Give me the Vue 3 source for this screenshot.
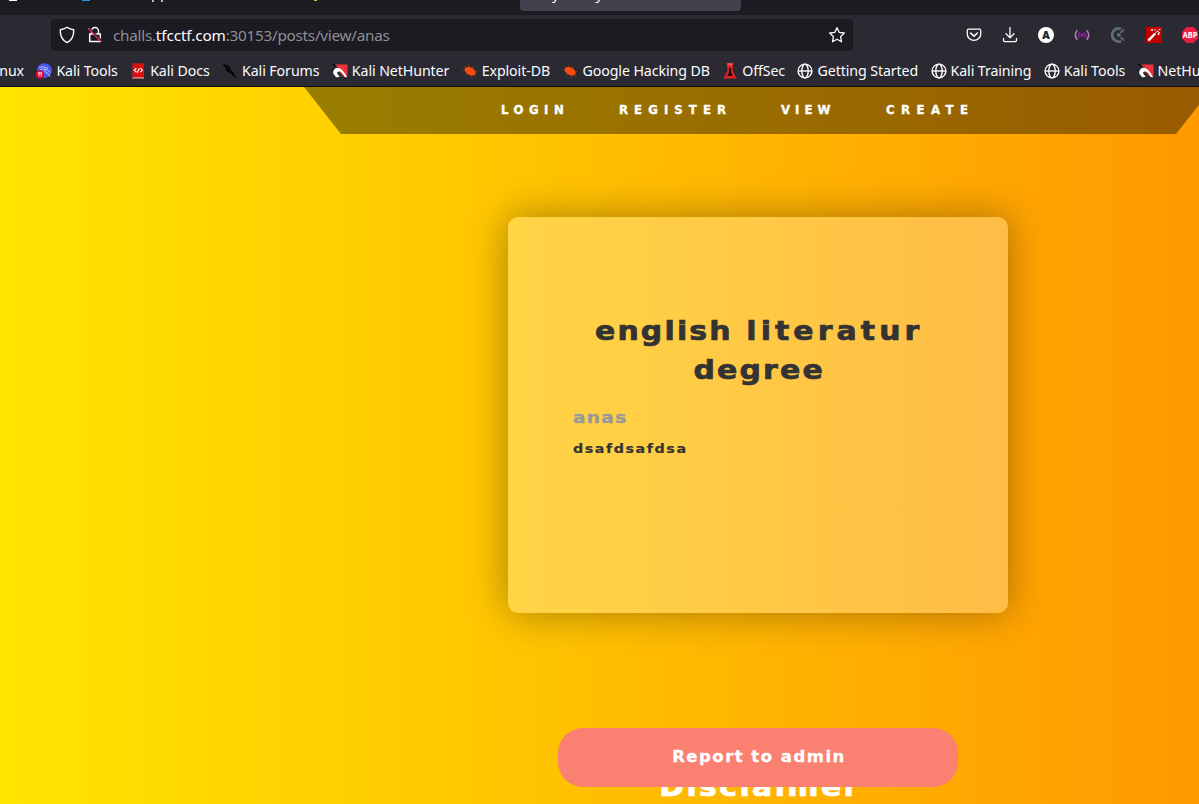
<script setup>
const bookmarks = [
  { icon: 'kali', label: 'Kali Tools' },
  { icon: 'book', label: 'Kali Docs' },
  { icon: 'forum', label: 'Kali Forums' },
  { icon: 'hunter', label: 'Kali NetHunter' },
  { icon: 'bug', label: 'Exploit-DB' },
  { icon: 'bug', label: 'Google Hacking DB' },
  { icon: 'offsec', label: 'OffSec' },
  { icon: 'globe', label: 'Getting Started' },
  { icon: 'globe', label: 'Kali Training' },
  { icon: 'globe', label: 'Kali Tools' },
  { icon: 'hunter', label: 'NetHunter' }
]
const links = ['login', 'register', 'view', 'create']
</script>

<template>
  <div class="window">
    <div class="tabs">
      <i class="fav-white"></i>
      <i class="fav-blue"></i>
      <span class="tab-text first">pp</span>
      <i class="fav-yellow"></i>
      <div class="tab-active"><span class="tab-text">y</span><span class="tab-text">y</span></div>
    </div>

    <div class="toolbar">
      <div class="urlbar">
        <svg class="shield" width="16" height="18" viewBox="0 0 16 18"><path d="M8 1.2C10 2.7 12.300 3.500 14.700 3.700C15 9.500 13.200 14 8 16.600C2.800 14 1 9.500 1.300 3.700C3.700 3.500 6 2.700 8 1.200Z" fill="none" stroke="#fbfbfe" stroke-width="1.400" stroke-linejoin="round" /></svg>
        <svg class="lock" width="16" height="18" viewBox="0 0 16 18"><path d="M4.500 8V5a3.500 3.500 0 0 1 7 0v3M2.700 8h10.600v7.500H2.700z" fill="none" stroke="#fbfbfe" stroke-width="1.500" stroke-linejoin="round" /><path d="M2.500 2.500L15 15" stroke="#1c1b22" stroke-width="1.500" /><path d="M1 2L14.500 16" stroke="#e22850" stroke-width="1.400" /></svg>
        <span class="url">challs.<b>tfcctf.com</b>:30153/posts/view/anas</span>
        <svg class="star" width="18" height="18" viewBox="0 0 18 18"><path d="M9 1.700L11.200 6.300L16.300 7L12.600 10.600L13.500 15.800L9 13.300L4.500 15.800L5.400 10.600L1.700 7L6.800 6.300Z" fill="none" stroke="#fbfbfe" stroke-width="1.300" stroke-linejoin="round" /></svg>
      </div>
      <div class="extensions">
        <svg viewBox="0 0 16 16"><path d="M2.600 2.200h10.800a1.300 1.300 0 0 1 1.300 1.300v3.700a6.700 6.200 0 0 1-13.400 0V3.500a1.300 1.300 0 0 1 1.300-1.300Z" fill="none" stroke="#fbfbfe" stroke-width="1.300" /><path d="M4.600 6L8 9.100L11.400 6" fill="none" stroke="#fbfbfe" stroke-width="1.600" stroke-linecap="round" stroke-linejoin="round" /></svg>
        <svg viewBox="0 0 16 16"><path d="M8 .5V10.500M4 6.700L8 10.700L12 6.700M1.500 11.500v1.700a1.500 1.500 0 0 0 1.500 1.500h10a1.500 1.500 0 0 0 1.500-1.500v-1.700" fill="none" stroke="#fbfbfe" stroke-width="1.300" stroke-linecap="round" stroke-linejoin="round" /></svg>
        <svg viewBox="0 0 16 16"><circle cx="8" cy="8" r="8" fill="#fff" /><text x="8" y="11.700" text-anchor="middle" class="letter-a">A</text></svg>
        <svg viewBox="0 0 16 16"><circle cx="8" cy="8" r="1.500" fill="#a51bb9" /><path d="M5.900 5.200Q3.700 8 5.900 10.800M10.100 5.200Q12.300 8 10.100 10.800" fill="none" stroke="#8b1b9c" stroke-width="1.400" /><path d="M3.300 3.200Q-.7 8 3.300 12.800M12.700 3.200Q16.700 8 12.700 12.800" fill="none" stroke="#b87bc4" stroke-width="1.500" /></svg>
        <svg viewBox="0 0 16 16"><path d="M11 1.800A6.600 6.600 0 1 0 11 14.200" fill="none" stroke="#5c6d77" stroke-width="2.700" /><circle cx="8.800" cy="8" r="1.900" fill="#5c6d77" /><path d="M10.500 5.900L14 2.400M10.500 10.100L14 13.600" stroke="#5c6d77" stroke-width="1.900" /></svg>
        <svg viewBox="0 0 16 16"><rect width="16" height="16" fill="#c00000" /><path d="M2.300 13.600L9.200 6.500" stroke="#fff" stroke-width="2.400" /><path d="M9.200 6.400L12 3.400M5 3h2M6 2v2M9 2.200v1.500M13 2.500h1.500M11.500 7h2M12.500 6v2M11 4l3 2" stroke="#fff" stroke-width="1" /></svg>
        <svg viewBox="0 0 16 16"><path d="M4.700 0h6.600L16 4.700v6.600L11.300 16H4.700L0 11.300V4.700Z" fill="#ed1e45" /><text x="8" y="11.100" text-anchor="middle" textLength="14.400" lengthAdjust="spacingAndGlyphs" class="abp">ABP</text></svg>
      </div>
    </div>

    <div class="bookmarks">
      <span class="cut"><span>Kali Linux</span></span>
      <span v-for="(b, n) in bookmarks" :key="n" class="bookmark">
        <svg viewBox="0 0 16 16">
          <template v-if="b.icon === 'kali'">
            <circle cx="8.500" cy="7.500" r="7.300" fill="#4d57ef" />
            <path d="M3 4.500Q8 2.500 12 5.500M4 7Q9 4 14.500 9.500M9 6Q7.500 9 11 10Q13.500 11 13.500 13.500" fill="none" stroke="#b9c4ff" stroke-width="1" />
            <circle cx="4" cy="11.500" r="4.100" fill="#e4002f" />
            <path d="M1.800 9.900h4.400M3 9.900V13.500M5.200 9.900V13.500" fill="none" stroke="#fff" stroke-width=".9" />
          </template>
          <template v-else-if="b.icon === 'book'">
            <path d="M1 .5h3V15.500H1z" fill="#2a3555" /><path d="M2.500 .3H14V14H2.500z" fill="#d91010" /><path d="M2.500 14H14v1.700H2.500z" fill="#d97a70" />
            <path d="M6.300 5.200L4.200 7.300L6.300 9.200M9.300 5.200L7.100 9.800M10.300 5.200L12.400 7.300L10.300 9.200" fill="none" stroke="#fff" stroke-width="1.100" />
          </template>
          <template v-else-if="b.icon === 'forum'">
            <path d="M0 1.500L3 0L4 2L6 1.500L8.500 4.500L10 8L12.500 9.500L12 11L15.500 14L15 15.700L10.500 13L8 10.500L5 9.500L2.500 5.500L3 4Z" fill="#08080a" stroke="#55545b" stroke-width=".3" />
          </template>
          <template v-else-if="b.icon === 'hunter'">
            <path d="M3 1.500H15.500V13.500L8 6Z" fill="#ef313a" />
            <path d="M.5 .8L3.500 3.500M.3 7L2 8" stroke="#08080a" stroke-width="1.500" />
            <path d="M3.700 13.800Q-1 9.500 2.700 6Q8 1.500 15.300 14.300L12.500 14Q8.500 7.500 5.500 9Q4 10.500 7.800 13.500Q5.500 15 3.700 13.800Z" fill="#fff" />
            <path d="M5.800 8.800Q9 7 12.800 14L9 12.500Q10 10 5.800 8.800" fill="#c32c38" />
          </template>
          <template v-else-if="b.icon === 'bug'">
            <path d="M2 3l3 3M.5 7l4 1M3.500 13l3-3M6 1.500l1.500 4M11 3l-.7 3.500M15.500 8.500h-3M9 15l.5-4M14 13.500l-2.500-2" stroke="#8e3a20" stroke-width=".8" />
            <ellipse cx="8.200" cy="8.300" rx="6" ry="3.700" transform="rotate(28 8.200 8.300)" fill="#ff4b0b" />
          </template>
          <template v-else-if="b.icon === 'offsec'">
            <path d="M5.200 .2h5.600v8l4 7.300H1.300l4-7.300z" fill="#df2025" /><path d="M7.100 5h1.900v4l1.800 4H5.300l1.800-4z" fill="#210a0d" /><path d="M5.300 .2h5.500v2.200H5.300z" fill="#ff514f" />
          </template>
          <template v-else>
            <g fill="none" stroke="#fbfbfe" stroke-width="1.400"><circle cx="8" cy="8" r="6.900" /><ellipse cx="8" cy="8" rx="3.200" ry="6.900" /><path d="M1 8H15" /></g>
          </template>
        </svg>
        <span>{{ b.label }}</span>
      </span>
    </div>

    <main class="page">
      <nav class="nav">
        <a v-for="l in links" :key="l" :class="l">{{ l }}</a>
      </nav>
      <article class="card">
        <h1><span class="tight">english </span>literatur<br /><span class="tight">degree</span></h1>
        <p class="author">anas</p>
        <p class="body">dsafdsafdsa</p>
      </article>
      <button class="report"><span>Report to admin</span></button>
      <h2 class="disclaimer">Disclaimer</h2>
    </main>
  </div>
</template>

<style>
html, body { margin: 0; overflow: hidden; }
</style>

<style scoped>
* { box-sizing: border-box; }
.window { width: 1199px; height: 804px; overflow: hidden; background: #2b2a33; font-family: "Noto Sans", sans-serif; color: #fbfbfe; }
.tabs { position: relative; height: 15px; background: #1c1b22; overflow: hidden; }
.tab-text { font-size: 14.67px; line-height: 20px; }
.tab-text.first { position: absolute; left: 151px; top: -18px; }
.fav-white { position: absolute; left: 9px; top: 0; width: 8px; height: 1px; background: #fff; }
.fav-blue { position: absolute; left: 82px; top: 0; width: 8px; height: 1px; background: #2396d6; }
.fav-yellow { position: absolute; left: 314px; top: 0; width: 3px; height: 1px; background: #d0c31c; }
.tab-active { position: absolute; left: 520px; top: -20px; width: 221px; height: 31px; padding: 3px 0 0 32px; display: flex; gap: 36px; background: #42414d; border-radius: 4px; }
.toolbar { height: 40px; padding-top: 4px; display: flex; }
.urlbar { width: 802px; height: 32px; margin-left: 51px; padding: 0 7px 0 8px; display: flex; align-items: center; background: #1c1b22; border-radius: 4px; }
.lock { margin-left: 12px; }
.url { margin-left: 10px; font-size: 15.300px; letter-spacing: -.27px; color: #8f8f96; white-space: pre; flex: 1; }
.url b { font-weight: 400; letter-spacing: -.1px; color: #fbfbfe; }
.extensions { flex: none; margin-left: 113px; height: 32px; display: flex; align-items: center; gap: 20px; }
.extensions svg { width: 16px; height: 16px; flex: none; }
.letter-a { font: 800 10.500px "Noto Sans", sans-serif; fill: #202027; stroke: #202027; stroke-width: .2px; }
.abp { font: 700 8.500px "Noto Sans", sans-serif; fill: #fff; }
.bookmarks { height: 32px; display: flex; align-items: center; gap: 12.400px; font-size: 14.200px; letter-spacing: -.09px; line-height: 20px; white-space: nowrap; border-bottom: 1px solid #0c0c0d; }
.cut { width: 24px; flex: none; display: flex; justify-content: flex-end; overflow: hidden; }
.bookmark { flex: none; display: flex; align-items: center; gap: 4px; }
.bookmark svg { width: 16px; height: 16px; flex: none; }
.page { width: 1516px; height: 717px; background: linear-gradient(90deg, #ffe500 0, #ff9900 1199px); display: flex; flex-direction: column; align-items: center; font-family: "DejaVu Sans", sans-serif; font-weight: 700; }
.nav { flex: none; width: 909px; height: 47px; margin-left: 1px; padding: 0 0 2px 197px; display: grid; grid-template-columns: 118px 162px 105px auto; align-items: center; background: rgba(0, 0, 0, .4); clip-path: polygon(0 0, 100% 0, 872px 100%, 37px 100%); font-family: "DejaVu Sans Condensed", "DejaVu Sans", sans-serif; font-stretch: condensed; font-size: 13px; text-transform: uppercase; color: #fff; -webkit-text-stroke: .35px #fff; }
.login { letter-spacing: 5.500px; }
.register { letter-spacing: 6.100px; }
.view { letter-spacing: 5px; }
.create { letter-spacing: 6.500px; }
.card { flex: none; width: 500px; height: 396px; margin-top: 83px; padding: 95px 65px 0; border-radius: 10px; background: rgba(255, 255, 255, .27); box-shadow: 0 0 38px rgba(8, 7, 16, .36); color: #333; }
h1 { margin: 0; padding-left: 2px; font-size: 26px; line-height: 39px; letter-spacing: 3.550px; text-align: center; white-space: nowrap; transform: scaleX(1.15); -webkit-text-stroke: .7px #333; }
.tight { letter-spacing: 1.900px; word-spacing: .8px; }
p { margin: 0; transform-origin: 0 50%; }
.author { margin-top: 16px; font-size: 16.500px; line-height: 24px; letter-spacing: 1.200px; color: #999; transform: scaleX(1.12); -webkit-text-stroke: .4px #999; }
.body { margin-top: 9px; font-size: 13px; line-height: 20px; letter-spacing: 1.400px; transform: scaleX(1.1); -webkit-text-stroke: .2px #333; }
.report { position: relative; z-index: 1; flex: none; width: 400px; height: 59px; margin-top: 115px; padding: 0 0 2px; border: 0; border-radius: 25px; background: salmon; color: #fff; font: 700 15px "DejaVu Sans", sans-serif; letter-spacing: 1.350px; }
.report span { display: inline-block; padding-left: 1px; transform: scaleX(1.1); -webkit-text-stroke: .3px #fff; }
.disclaimer { flex: none; margin: -19px 0 0; padding-left: 4px; font-size: 26px; line-height: 39px; letter-spacing: 2.100px; color: #fff; transform: scaleX(1.15); -webkit-text-stroke: .7px #fff; }
</style>
